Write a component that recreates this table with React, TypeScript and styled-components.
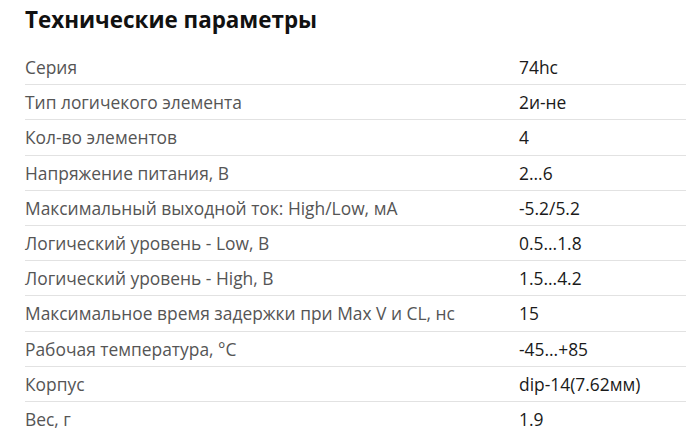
import React from "react";
import styled, { createGlobalStyle } from "styled-components";

const Global = createGlobalStyle`
  body {
    margin: 0;
    background: #ffffff;
    font-family: "Open Sans", "Noto Sans", sans-serif;
  }
`;

const Wrapper = styled.div`
  padding: 0 0 0 25px;
  width: 686px;
  box-sizing: border-box;
  overflow: hidden;
`;

const Title = styled.h2`
  margin: 0;
  height: 50px;
  padding-top: 5px;
  box-sizing: border-box;
  font-size: 22.4px;
  font-weight: 700;
  line-height: 30px;
  color: #111111;
`;

const Table = styled.div`
  display: flex;
  flex-direction: column;
`;

const Row = styled.div<{ $last?: boolean }>`
  display: grid;
  grid-template-columns: 494px 1fr;
  height: 35.2px;
  box-sizing: border-box;
  align-items: center;
  border-bottom: ${(p) => (p.$last ? "none" : "1px solid #e2e2e2")};
  font-size: 17.4px;
`;

const Label = styled.span`
  color: #555555;
`;

const Value = styled.span`
  color: #1a1a1a;
`;

const params: [string, string][] = [
  ["Серия", "74hc"],
  ["Тип логичекого элемента", "2и-не"],
  ["Кол-во элементов", "4"],
  ["Напряжение питания, В", "2...6"],
  ["Максимальный выходной ток: High/Low, мА", "-5.2/5.2"],
  ["Логический уровень - Low, В", "0.5...1.8"],
  ["Логический уровень - High, В", "1.5...4.2"],
  ["Максимальное время задержки при Max V и CL, нс", "15"],
  ["Рабочая температура, °C", "-45...+85"],
  ["Корпус", "dip-14(7.62мм)"],
  ["Вес, г", "1.9"],
];

function App() {
  return (
    <Wrapper>
      <Global />
      <Title>Технические параметры</Title>
      <Table>
        {params.map(([label, value], i) => (
          <Row key={label} $last={i === params.length - 1}>
            <Label>{label}</Label>
            <Value>{value}</Value>
          </Row>
        ))}
      </Table>
    </Wrapper>
  );
}

export default App;
